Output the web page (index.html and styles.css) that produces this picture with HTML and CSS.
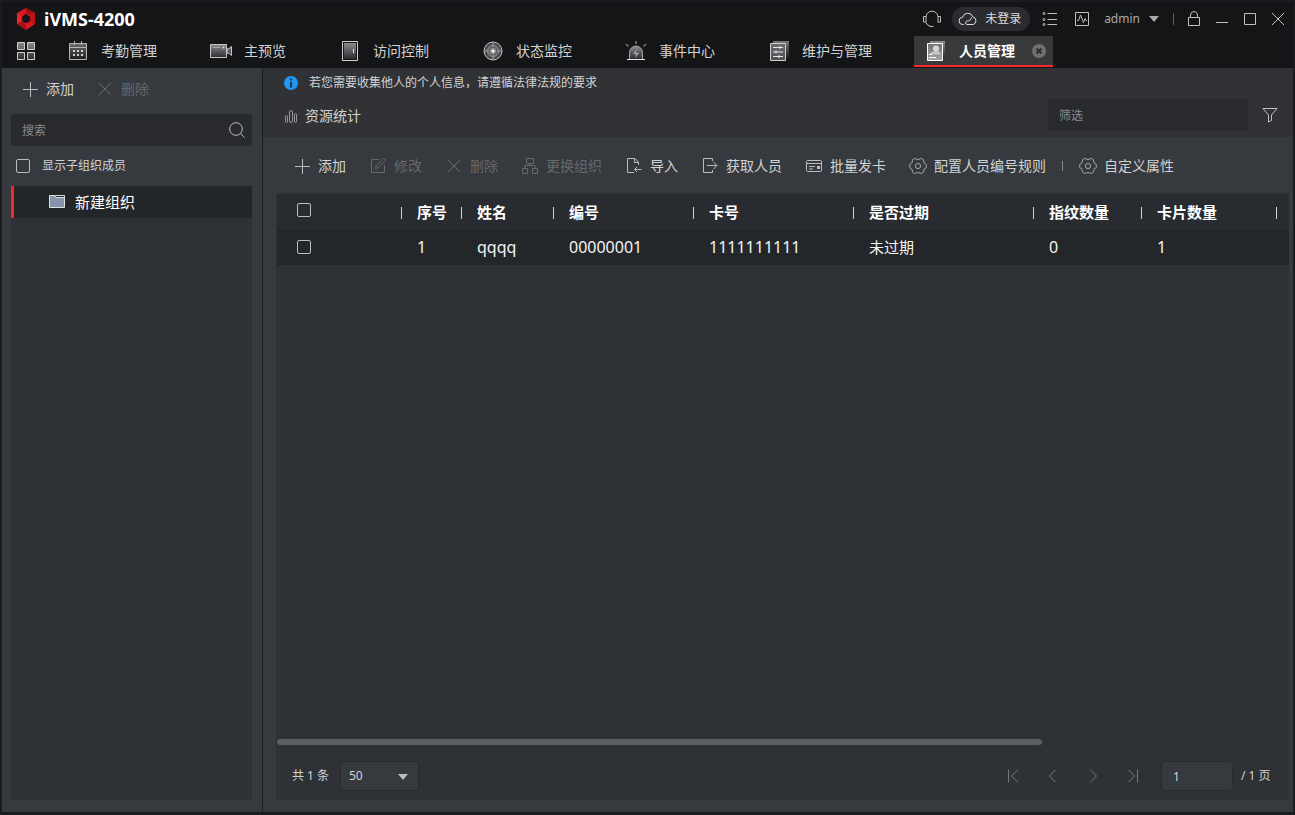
FILE: index.html
```html
<!DOCTYPE html>
<html lang="zh-CN">
<head>
<meta charset="utf-8">
<meta name="viewport" content="width=device-width, initial-scale=1">
<title>iVMS-4200</title>
<link rel="stylesheet" href="styles.css">
</head>
<body>
<svg class="defs" aria-hidden="true">
  <defs>
    <linearGradient id="metal" x1="0" y1="0" x2="0" y2="1"><stop offset="0" stop-color="#8b8c8e"/><stop offset="1" stop-color="#2c2d30"/></linearGradient>
    <linearGradient id="steel" x1="0" y1="0" x2="0" y2="1"><stop offset="0" stop-color="#6a6b6d"/><stop offset="1" stop-color="#4e4f52"/></linearGradient>
    <linearGradient id="bright" x1="0" y1="0" x2="0" y2="1"><stop offset="0" stop-color="#707173"/><stop offset="1" stop-color="#a5a6a8"/></linearGradient>
    <linearGradient id="shade" x1="0" y1="0" x2="0" y2="1"><stop offset="0" stop-color="#77787a"/><stop offset="1" stop-color="#1c1d1f"/></linearGradient>
    <symbol id="i-plus" viewBox="0 0 16 16"><path d="M8.5 1v15M1 8.500h15"/></symbol>
    <symbol id="i-cross" viewBox="0 0 16 16"><path d="M2 2l12 12M14 2L2 14"/></symbol>
    <symbol id="i-gear" viewBox="0 0 18 18"><path d="M5.500 1.500Q9 3.500 12.500 1.500L14.500 2.800Q14 6.300 17.300 7.500V10.500Q14 11.700 14.500 15.200L12.500 16.500Q9 14.500 5.500 16.500L3.500 15.200Q4 11.700 .7 10.500V7.500Q4 6.300 3.500 2.800Z"/><circle cx="9" cy="9" r="2.600"/></symbol>
  </defs>
</svg>
<div class="window">
  <header class="header">
    <div class="titlebar">
      <div class="brand">
        <svg class="logo" width="20" height="22" viewBox="0 0 20 22"><path fill="#d8171f" d="M10 0l9 5v11l-9 6-9-6V5z"/><path fill="#a40e16" d="M10 0l9 5-5 2-4-3zM1 16l5-2 4 3v5z"/><path fill="#ee242c" d="M1 5l4 3v5l-4 3z"/><path fill="#bd121a" d="M19 5v11l-5-3V8z"/><path fill="#141517" d="M10 5.500l4 3.500-.5 5-3.500 1-3.500-1L6 9z"/></svg>
        <h1 class="brand-name">iVMS-4200</h1>
      </div>
      <div class="tools">
        <button class="tool" aria-label="客服"><svg width="20" height="18" viewBox="0 0 20 18"><path d="M4 12.500V7a6 5.800 0 0 1 12 0v5.500M4 6.500H1.500v5.500H4M16 6.500h2.500v5.500H16M4 12.500q1 3 4 3.500M7.500 16.500h4"/></svg></button>
        <button class="login"><svg width="20" height="16" viewBox="0 0 20 16"><path d="M6 13.500H4.800a3.600 3.600 0 0 1-.3-7.200A5.500 5.500 0 0 1 15 6a3.900 3.900 0 0 1 .2 7.500H9q-2-.3-1.300-2.500 1-1.500 3-1.200 2.500-.8 2.800-3.300"/></svg><span>未登录</span></button>
        <button class="tool" aria-label="任务"><svg width="16" height="16" viewBox="0 0 16 16"><path d="M5.500 2.500H15M5.500 8.500H15M5.500 13.500H15"/><circle cx="2" cy="2.500" r="1"/><circle cx="2" cy="8.500" r="1"/><circle cx="2" cy="13.500" r="1"/></svg></button>
        <button class="tool" aria-label="状态"><svg width="16" height="16" viewBox="0 0 16 16"><path d="M1.500 1.500h13v13h-13zM3 9.500h1.500L6.500 4l3 7.500 1.500-4 1 2h1"/></svg></button>
        <button class="account"><span>admin</span><svg width="10" height="6" viewBox="0 0 10 6"><path class="solid" d="M0 0h10L5 6z"/></svg></button>
        <span class="title-rule"></span>
        <div class="window-buttons">
          <button class="tool" aria-label="锁定"><svg width="14" height="16" viewBox="0 0 14 16"><path d="M1.500 6.500h11v8h-11zM3.500 6.500V4q.3-3.500 3.500-3.500T10.500 4v2.500"/></svg></button>
          <button class="tool" aria-label="最小化"><svg width="14" height="14" viewBox="0 0 14 14"><path d="M1 10.500h12"/></svg></button>
          <button class="tool" aria-label="最大化"><svg width="14" height="14" viewBox="0 0 14 14"><path d="M1.500 1.500h11v11h-11z"/></svg></button>
          <button class="tool" aria-label="关闭"><svg width="14" height="14" viewBox="0 0 14 14"><path d="M1 1l12 12M13 1L1 13"/></svg></button>
        </div>
      </div>
    </div>
    <nav class="nav">
      <button class="home" aria-label="主页"><svg width="18" height="18" viewBox="0 0 18 18"><g fill="url(#metal)" stroke="#d0d0d0"><path d="M.5.5h7v7h-7zM10.500.5h7v7h-7zM.5 10.500h7v7h-7zM10.500 10.500h7v7h-7z"/></g></svg></button>
      <a class="tab" href="#"><svg class="tab-icon" viewBox="0 0 20 20"><path fill="url(#shade)" stroke="#b4b5b6" d="M1.500 2.500h17v16h-17zM1.500 6.500h17M6.500 0v4M13.500 0v4"/><path stroke="#d0d0d0" stroke-width="2" stroke-dasharray="2 2" d="M5 10h10M5 14h10"/></svg>考勤管理</a>
      <a class="tab" href="#"><svg class="tab-icon wide" viewBox="0 0 24 20"><path fill="url(#metal)" stroke="#c4c5c6" d="M1.500 3.500h16v13h-16zM18 8l2-.5 2.500-2v9L20 12.500 18 12z"/><path stroke="#aaa" d="M4 6.500h7"/><circle cx="14.500" cy="6.500" r="1" fill="#ddd"/></svg>主预览</a>
      <a class="tab" href="#"><svg class="tab-icon" viewBox="0 0 20 20"><path fill="#141517" stroke="#d0d0d0" d="M2.500.5h15v19h-15z"/><path fill="url(#metal)" d="M4 2h12v16H4z"/><path stroke="#e0e0e0" d="M13.500 8v4"/></svg>访问控制</a>
      <a class="tab" href="#"><svg class="tab-icon" viewBox="0 0 20 20"><circle cx="10" cy="10" r="9" fill="#4b4c4f" stroke="#bfc0c1"/><circle cx="10" cy="10" r="5.500" fill="#606163" stroke="#929395"/><circle cx="10" cy="10" r="2.500" fill="#77787a" stroke="#a4a5a6"/><path stroke="#9b9c9e" d="M10 1v5M10 14v5M1 10h5M14 10h5"/><circle cx="10" cy="10" r="1.500" fill="#fff"/></svg>状态监控</a>
      <a class="tab" href="#"><svg class="tab-icon wide" viewBox="0 0 24 20"><path fill="url(#metal)" stroke="#a4a5a6" d="M5.500 18v-6.500a6.500 6.500 0 0 1 13 0V18"/><path stroke="#e5e5e5" d="M3 18.500h18"/><path stroke="#77787a" stroke-width="1.500" d="M12 0v3M2 3l2.500 2.500M22 3l-2.500 2.500"/><path fill="#a4a5a6" d="M13 8l-4 5h3l-1 4 4-5h-3z"/></svg>事件中心</a>
      <a class="tab" href="#"><svg class="tab-icon" viewBox="0 0 20 20"><path fill="url(#shade)" d="M4 0h16v17H4z"/><path fill="url(#steel)" stroke="#d0d0d0" d="M1.500 2.500h15v17h-15z"/><path stroke="#e6e6e6" d="M4 6.500h10M4 11h10M4 15.500h10M11 5v3M7 9.500v3M10 14v3"/></svg>维护与管理</a>
      <a class="tab active" href="#" aria-current="page"><svg class="tab-icon" viewBox="0 0 20 20"><path fill="url(#metal)" d="M4 0h15v17H4z"/><path fill="url(#bright)" stroke="#fff" d="M1.500 2.500h15v17h-15z"/><circle cx="10" cy="7.500" r="3" fill="#d8d8d8"/><path fill="#c8c8c8" d="M4 13.500q1-3 5.500-3.500T15 13.500z"/><path stroke="#fff" d="M3 13.500h3M3 16.500h7"/></svg>人员管理<svg class="tab-close" viewBox="0 0 14 14"><circle cx="7" cy="7" r="7" fill="#6f7072"/><path stroke="#2c2d2f" stroke-width="2" d="M4.500 4.500l5 5M9.500 4.500l-5 5"/></svg></a>
    </nav>
  </header>
  <div class="body">
    <aside class="sidebar">
      <div class="side-tools">
        <button class="action"><svg class="icon"><use href="#i-plus"/></svg>添加</button>
        <button class="action" disabled><svg class="icon"><use href="#i-cross"/></svg>删除</button>
      </div>
      <div class="search">
        <input class="search-input" type="text" placeholder="搜索" aria-label="搜索">
        <svg width="16" height="16" viewBox="0 0 16 16"><circle cx="7" cy="7" r="6.300"/><path d="M11.500 11.500l4 4"/></svg>
      </div>
      <label class="check-row"><input class="check" type="checkbox">显示子组织成员</label>
      <div class="tree">
        <button class="tree-item"><svg width="16" height="14" viewBox="0 0 16 14"><path fill="#8893ac" stroke="#dfe0e2" d="M.5.5h5.500l1 2h8.500v10H.5z"/><path stroke="#dfe0e2" d="M6.500.5h9v2"/></svg>新建组织</button>
      </div>
    </aside>
    <main class="main">
      <section class="top">
        <div class="top-text">
          <p class="notice"><svg width="14" height="14" viewBox="0 0 14 14"><circle cx="7" cy="7" r="7" fill="#2196f3"/><path stroke="#233447" stroke-width="2" d="M7 2.500v2M7 6v5.500"/></svg>若您需要收集他人的个人信息，请遵循法律法规的要求</p>
          <button class="stats"><svg width="14" height="14" viewBox="0 0 14 14"><rect x="1.500" y="6.500" width="2" height="7" rx="1"/><rect x="5.500" y="1.500" width="3" height="12" rx="1.500"/><rect x="10.500" y="4.500" width="2" height="9" rx="1"/></svg>资源统计</button>
        </div>
        <div class="filter">
          <input class="filter-input" type="text" placeholder="筛选" aria-label="筛选">
          <button class="tool" aria-label="过滤"><svg width="16" height="16" viewBox="0 0 16 16"><path d="M1 1.500h14L9.500 8v5.500L6.500 15V8z"/></svg></button>
        </div>
      </section>
      <div class="toolbar">
        <button class="action"><svg class="icon"><use href="#i-plus"/></svg>添加</button>
        <button class="action" disabled><svg class="icon" viewBox="0 0 16 16"><path d="M9 1.500H1.500v13h13V7M5.500 10.500l.8-3L13.500.3l2 2-7.400 7.300z"/></svg>修改</button>
        <button class="action" disabled><svg class="icon"><use href="#i-cross"/></svg>删除</button>
        <button class="action" disabled><svg class="icon" viewBox="0 0 16 16"><path d="M4.500.5h7v5h-7zM.5 10.500h5v5h-5zM10.500 10.500h5v5h-5zM8 5.500v2M3 10.500v-3h10v3"/></svg>更换组织</button>
        <button class="action"><svg class="icon" viewBox="0 0 16 16"><path d="M8 14.500H1.500V.5H9L12.500 4v3M8.500.5v4h4M15.500 11.500h-7M11 9l-2.500 2.500L11 14"/></svg>导入</button>
        <button class="action"><svg class="icon" viewBox="0 0 16 16"><path d="M10.500 3V.5h-9v14h9V12M5 7.500h9.500M11.500 4l3.500 3.500-3.500 3.500"/></svg>获取人员</button>
        <button class="action"><svg class="icon" viewBox="0 0 16 16"><rect x=".5" y="2.500" width="15" height="11" rx="1"/><path d="M.5 5.500h15M3 8.500h6M3 11h4"/><path class="solid" d="M11 8h3v3h-3z"/></svg>批量发卡</button>
        <button class="action"><svg class="icon gear"><use href="#i-gear"/></svg>配置人员编号规则</button>
        <span class="rule"></span>
        <button class="action"><svg class="icon gear"><use href="#i-gear"/></svg>自定义属性</button>
      </div>
      <section class="panel">
        <table class="grid">
          <colgroup><col class="c-check"><col class="c-index"><col class="c-name"><col class="c-id"><col class="c-card"><col class="c-expired"><col class="c-finger"><col class="c-count"><col></colgroup>
          <thead><tr><th class="pick"><input class="check" type="checkbox" aria-label="全选"></th><th>序号</th><th>姓名</th><th>编号</th><th>卡号</th><th>是否过期</th><th>指纹数量</th><th>卡片数量</th><th></th></tr></thead>
          <tbody><tr><td class="pick"><input class="check" type="checkbox" aria-label="选择 qqqq"></td><td class="latin">1</td><td class="latin">qqqq</td><td class="latin">00000001</td><td class="latin">1111111111</td><td>未过期</td><td class="latin">0</td><td class="latin">1</td><td></td></tr></tbody>
        </table>
        <div class="scroll-track"><div class="scroll-thumb"></div></div>
        <footer class="pager">
          <label class="total" for="size">共 1 条</label>
          <div class="size"><select class="size-select" id="size"><option>50</option></select><svg class="size-arrow" width="10" height="6" viewBox="0 0 10 6"><path class="solid" d="M0 0h10L5 6z"/></svg></div>
          <div class="pages">
            <button class="step" aria-label="首页" disabled><svg width="12" height="14" viewBox="0 0 12 14"><path d="M1.500.5v13M11 .5L4.500 7l6.500 6.500"/></svg></button>
            <button class="step" aria-label="上一页" disabled><svg width="12" height="14" viewBox="0 0 12 14"><path d="M9 .5L2.500 7 9 13.500"/></svg></button>
            <button class="step" aria-label="下一页" disabled><svg width="12" height="14" viewBox="0 0 12 14"><path d="M3 .5L9.500 7 3 13.500"/></svg></button>
            <button class="step" aria-label="末页" disabled><svg width="12" height="14" viewBox="0 0 12 14"><path d="M10.500.5v13M1 .5L7.500 7 1 13.500"/></svg></button>
          </div>
          <input class="page-input" id="page" type="text" value="1">
          <label class="page-total" for="page">/ 1 页</label>
        </footer>
      </section>
    </main>
  </div>
</div>
</body>
</html>
```
FILE: styles.css
```css
* { box-sizing: border-box; }
body {
  margin: 0;
  background: #1a1c1f;
  color: #d2d2d3;
  font: 14px/20px "Noto Sans", "Noto Sans CJK SC", sans-serif;
}
button, input, select { font: inherit; color: inherit; }
button { padding: 0; border: 0; background: none; display: flex; align-items: center; }
svg { display: block; flex: none; fill: none; stroke: currentColor; }
.defs { position: absolute; width: 0; height: 0; }
.solid { fill: currentColor; stroke: none; }
p, h1 { margin: 0; }

.window { min-height: 100vh; padding: 2px 2px 3px; display: flex; flex-direction: column; }

/* Title bar and module tabs */
.header { background: #141517; }
.titlebar { height: 34px; display: flex; justify-content: space-between; align-items: center; padding: 0 8px 0 14px; }
.brand { display: flex; align-items: center; gap: 8px; }
.logo, .tab-icon, .tab-close { stroke: none; }
.brand-name { font-size: 18px; line-height: 24px; font-weight: 700; color: #fff; }
.tools { display: flex; align-items: center; color: #c0c0c1; }
.tools > .tool { margin-right: 16px; }
.tools > .tool:first-child { margin-right: 10px; }
.login { height: 24px; margin-right: 12px; padding: 0 9px 0 6px; gap: 7px; border-radius: 12px; background: #2a2c30; font-size: 12px; line-height: 20px; color: #dcdcdc; }
.account { gap: 9px; margin-left: -2px; font-size: 12px; color: #a9a9aa; }
.title-rule { width: 1px; height: 12px; margin: 0 13px 0 14px; background: #5c5d5f; }
.window-buttons { display: flex; gap: 14px; align-items: center; }
.nav { height: 32px; display: flex; align-items: flex-start; }
.home { width: 54px; height: 30px; padding-left: 15px; }
.tab { height: 31px; margin-right: 4px; padding: 0 38px 2px 12px; display: flex; align-items: center; gap: 13px; color: #d2d2d3; text-decoration: none; white-space: nowrap; }
.tab-icon { width: 20px; height: 20px; }
.tab-icon.wide { width: 24px; margin: 0 -2px; }
.tab.active { padding: 0 7px 0 12px; border-bottom: 2px solid #f4272d; background: #38393b; color: #fff; font-weight: 700; }
.tab-close { width: 14px; height: 14px; margin-left: 4px; }

/* Organisation sidebar */
.body { flex: 1; display: flex; }
.sidebar { width: 261px; flex: none; display: flex; flex-direction: column; padding: 0 10px 12px 9px; border-right: 1px solid #1a1c1f; background: #36393e; }
.side-tools { height: 46px; display: flex; align-items: center; gap: 23px; padding: 0 11px 4px; }
.action { gap: 8px; color: #d2d2d3; white-space: nowrap; }
.action:disabled { color: #66686b; }
.icon { width: 16px; height: 16px; overflow: visible; color: #bcbdbe; }
.icon.gear { width: 18px; height: 18px; margin: 0 -1px; color: #a6a7a9; }
.action:disabled .icon { color: #66686b; }
.search { height: 32px; display: flex; align-items: center; padding: 0 7px 0 11px; border-radius: 3px; background: #282a2e; color: #c0c0c1; }
.search-input { flex: 1; min-width: 0; padding: 2px 0 0; border: 0; outline: 0; background: none; font-size: 12px; }
::placeholder { color: #88898b; opacity: 1; }
.check-row { height: 40px; display: flex; align-items: center; gap: 12px; padding-left: 5px; font-size: 12px; }
.check { appearance: none; flex: none; width: 14px; height: 14px; margin: 0; border: 1px solid #bcbdbe; border-radius: 2px; }
.tree { flex: 1; background: #2e3136; }
.tree-item { width: 100%; height: 32px; gap: 10px; padding-left: 35px; border-left: 3px solid #f4272d; background: #232629; color: #fff; font-size: 15px; }

/* Person list */
.main { flex: 1; min-width: 0; display: flex; flex-direction: column; padding-bottom: 12px; background: #36393e; }
.top { height: 69px; display: flex; justify-content: space-between; align-items: center; padding: 0 15px 0 21px; background: #303236; }
.top-text { display: flex; flex-direction: column; gap: 13px; padding-bottom: 6px; }
.notice { display: flex; align-items: center; gap: 11px; font-size: 12px; line-height: 20px; }
.notice svg { stroke: none; }
.stats { gap: 7px; line-height: 20px; }
.stats svg { color: #97989a; }
.filter { display: flex; align-items: center; gap: 14px; padding-top: 24px; color: #c0c0c1; }
.filter-input { width: 200px; height: 32px; padding: 2px 11px 0; border: 0; border-radius: 3px; background: #282a2e; font-size: 12px; }
.toolbar { height: 56px; display: flex; align-items: center; gap: 24px; padding: 1px 16px 0 31px; }
.rule { width: 1px; height: 10px; margin: 0 -7px 0 -8px; background: #88898b; }
.panel { flex: 1; display: flex; flex-direction: column; margin: 0 4px 0 13px; padding: 1px 0 0 1px; background: #2e3136; }
.grid { width: 100%; table-layout: fixed; border-collapse: collapse; color: #f4f4f4; font-size: 15px; line-height: 22px; text-align: left; }
.grid tr { height: 36px; background: #282b2f; }
.grid tbody tr { height: 34px; background: #24272a; border-top: 1px solid #212326; border-bottom: 1px solid #212326; }
.grid th, .grid td { padding: 0 0 0 16px; white-space: nowrap; }
.grid th { font-weight: 700; color: #fff; background: linear-gradient(#d2d2d3, #d2d2d3) no-repeat 0 13px / 1px 12px; }
.grid .pick { padding-left: 20px; background: none; }
.grid .pick .check { display: block; }
.grid thead .pick { padding-bottom: 3px; }
.c-check { width: 124px; }
.c-index { width: 60px; }
.c-name { width: 92px; }
.c-id { width: 140px; }
.c-card { width: 160px; }
.c-expired { width: 180px; }
.c-finger { width: 108px; }
.c-count { width: 135px; }
.grid .latin { font-size: 16px; }
.scroll-track { margin-top: auto; padding-right: 247px; }
.scroll-thumb { height: 6px; border-radius: 3px; background: #5d5e60; }
.pager { display: flex; align-items: center; padding: 16px 15px 9px; font-size: 12px; }
.total { min-width: 39px; margin-right: 9px; }
.size { position: relative; width: 79px; }
.size-select { appearance: none; display: block; width: 100%; height: 30px; padding: 0 8px; border: 1px solid #292b2e; border-radius: 3px; background: #36393e; font-size: 12px; }
.size-arrow { position: absolute; right: 11px; top: 13px; color: #bcbdbe; pointer-events: none; }
.pages { display: flex; gap: 28px; margin-left: auto; color: #77787a; }
.step { color: inherit; }
.page-input { width: 72px; height: 30px; margin: 0 8px 0 22px; padding: 0 11px; border: 1px solid #292b2e; border-radius: 3px; background: #36393e; }
.page-total { min-width: 33px; }
```
